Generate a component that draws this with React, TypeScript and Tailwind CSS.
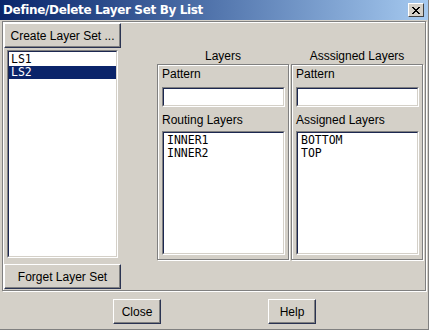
import type { ReactNode } from "react";

const ui = "font-['Liberation_Sans',Arial,sans-serif] text-[12px] text-black";
const mono = "font-['DejaVu_Sans_Mono',monospace] text-[11.5px] leading-[13px]";

function RaisedButton({ children, className }: { children: ReactNode; className?: string }) {
  return (
    <button
      className={`h-[25px] bg-[#d4d0c8] border border-t-white border-l-white border-r-[#2a3352] border-b-[#2a3352] shadow-[inset_-1px_-1px_0_#808080] ${ui} ${className ?? ""}`}
    >
      {children}
    </button>
  );
}

function Sunken({ children, className }: { children?: ReactNode; className?: string }) {
  return (
    <div className={`border border-t-[#808080] border-l-[#808080] border-r-white border-b-white ${className ?? ""}`}>
      <div className="h-full bg-white border border-t-[#1c2750] border-l-[#1c2750] border-r-[#d4d0c8] border-b-[#d4d0c8]">
        {children}
      </div>
    </div>
  );
}

type GroupProps = {
  listLabel: string;
  items: string[];
};

function LayerGroup({ listLabel, items }: GroupProps) {
  return (
    <div className="w-[132px] h-[196px] border border-[#808080] shadow-[inset_1px_1px_0_#fff,1px_1px_0_#fff] px-[4px] flex flex-col">
      <div className="mt-[2px] leading-[14px]">Pattern</div>
      <Sunken className="mt-[6px] h-[20px] w-[123px]" />
      <div className="mt-[6px] leading-[14px]">{listLabel}</div>
      <Sunken className="mt-[4px] h-[124px] w-[123px]">
        <div className={`${mono} pl-[3px] pt-[1px]`}>
          {items.map((item) => (
            <div key={item}>{item}</div>
          ))}
        </div>
      </Sunken>
    </div>
  );
}

export default function App() {
  return (
    <div className={`w-[429px] h-[330px] bg-[#d4d0c8] flex flex-col border-r border-b border-[#808080] ${ui}`}>
      {/* title bar */}
      <div className="h-[20px] flex items-center justify-between bg-gradient-to-r from-[#0a246a] to-[#a6caf0] pl-[3px] pr-[4px]">
        <span className="text-white font-bold text-[12px] font-['DejaVu_Sans',sans-serif] tracking-[-0.35px]">
          Define/Delete Layer Set By List
        </span>
        <div className="w-[16px] h-[14px] bg-[#d4d0c8] border border-t-white border-l-white border-r-[#404040] border-b-[#404040] flex items-center justify-center">
          <svg width="8" height="7" viewBox="0 0 8 7">
            <path d="M0 0 L7 7 M1 0 L8 7 M7 0 L0 7 M8 0 L1 7" stroke="black" strokeWidth="1" />
          </svg>
        </div>
      </div>

      {/* main panel */}
      <div className="ml-[2px] mt-[1px] w-[424px] h-[270px] border border-[#808080] shadow-[inset_1px_1px_0_#fff,1px_1px_0_#fff] flex">
        <div className="ml-[1px] mt-[1px] w-[117px] flex flex-col">
          <RaisedButton className="w-[117px] h-[25px]">Create Layer Set ...</RaisedButton>
          <Sunken className="mt-[2px] ml-[3px] w-[111px] h-[208px]">
            <div className={`${mono} pt-[1px]`}>
              <div className="pl-[2px]">LS1</div>
              <div className="pl-[2px] bg-[#0a246a] text-white">LS2</div>
            </div>
          </Sunken>
          <RaisedButton className="mt-[6px] w-[117px] h-[25px]">Forget Layer Set</RaisedButton>
        </div>

        <div className="ml-[36px] mt-[27px] flex flex-col">
          <div className="flex gap-[2px] leading-[14px]">
            <div className="w-[132px] text-center">Layers</div>
            <div className="w-[132px] text-center">Asssigned Layers</div>
          </div>
          <div className="mt-[1px] flex gap-[2px]">
            <LayerGroup listLabel="Routing Layers" items={["INNER1", "INNER2"]} />
            <LayerGroup listLabel="Assigned Layers" items={["BOTTOM", "TOP"]} />
          </div>
        </div>
      </div>

      {/* bottom buttons */}
      <div className="mt-[8px] flex">
        <RaisedButton className="ml-[113px] w-[48px]">Close</RaisedButton>
        <RaisedButton className="ml-[107px] w-[48px]">Help</RaisedButton>
      </div>
    </div>
  );
}
